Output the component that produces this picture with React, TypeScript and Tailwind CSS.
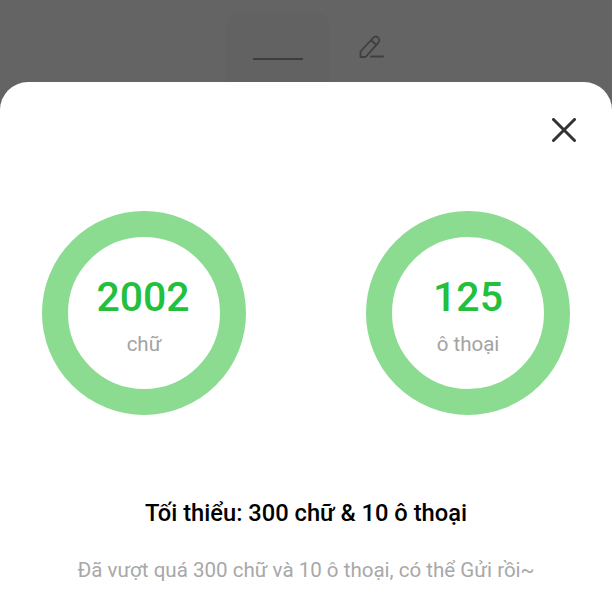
const stats = [
  { value: "2002", label: "chữ", shift: "-translate-x-px" },
  { value: "125", label: "ô thoại", shift: "" },
];

export default function App() {
  return (
    <div className="flex h-[600px] w-[612px] flex-col overflow-hidden bg-[#646464] font-['Roboto',sans-serif]">
      {/* Toolbar behind the overlay */}
      <div className="flex h-[82px] shrink-0 items-end pl-[226px]">
        <div className="flex h-[70px] w-[103px] items-end justify-center rounded-t-[14px] bg-[#626262] pb-[22px]">
          <div className="h-[2px] w-[50px] bg-[#3d3d3d]" />
        </div>
        <svg className="mb-[23px] ml-[30px]" width="26" height="24" viewBox="0 0 26 24" fill="none" stroke="#3f3f3f" strokeWidth="1.8" strokeLinecap="round" strokeLinejoin="round">
          <path d="M1.5 22 L1.5 16.5 L14 3 C15.5 1.4 17.5 1.2 19.1 2.6 C20.7 4 20.7 6 19.3 7.6 L6.7 22 Z" />
          <path d="M12 5.2 L17.3 9.8" />
          <path d="M12 21.5 L24 21.5" />
        </svg>
      </div>

      {/* Bottom sheet */}
      <div className="flex flex-1 flex-col rounded-t-[28px] bg-white">
        <div className="flex justify-end pr-[36px] pt-[36px]">
          <svg width="24" height="24" viewBox="0 0 24 24" fill="none" stroke="#333333" strokeWidth="3" strokeLinecap="round">
            <path d="M1.5 1.5 L22.5 22.5" />
            <path d="M22.5 1.5 L1.5 22.5" />
          </svg>
        </div>

        <div className="mt-[69px] flex justify-between pl-[42px] pr-[42px]">
          {stats.map((s) => (
            <div
              key={s.label}
              className="flex h-[204px] w-[204px] flex-col items-center rounded-full border-[26px] border-[#8bdc90] pt-[36px]"
            >
              <div className={`${s.shift} text-[41px] leading-[48px] font-medium text-[#22c03c]`}>{s.value}</div>
              <div className="mt-[11px] text-[20.5px] leading-[24px] text-[#a3a3a3]">{s.label}</div>
            </div>
          ))}
        </div>

        <div className="mt-[83px] text-center text-[23.7px] leading-[30px] font-medium text-black">
          Tối thiểu: 300 chữ &amp; 10 ô thoại
        </div>
        <div className="mt-[28px] text-center text-[20.55px] leading-[28px] text-[#a8a8a8]">
          Đã vượt quá 300 chữ và 10 ô thoại, có thể Gửi rồi~
        </div>
      </div>
    </div>
  );
}
